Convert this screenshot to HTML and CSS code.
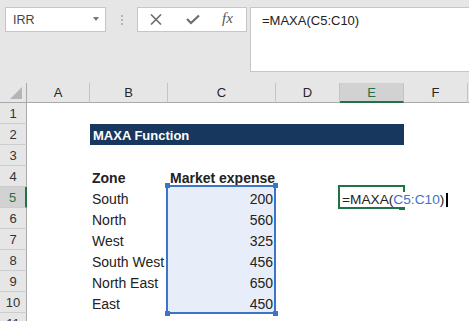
FILE: index.html
```html
<!DOCTYPE html>
<html>
<head>
  <meta charset="utf-8">
  <link rel="stylesheet" href="styles.css">
</head>
<body>
  <div class="toolbar">
    <div class="namebox">IRR<span class="caret"></span></div>
    <div class="grip"><i></i><i></i><i></i></div>
    <div class="fbtns">
      <svg class="ic-x" width="12" height="11" viewBox="0 0 12 11"><path d="M1 0.5 L11 10.5 M11 0.5 L1 10.5" stroke="#6d6d6d" stroke-width="1.6" fill="none"/></svg>
      <svg class="ic-ok" width="14" height="11" viewBox="0 0 14 11"><path d="M1 5 L5 9 L13 1.5" stroke="#6d6d6d" stroke-width="2.2" fill="none"/></svg>
      <span class="fx">fx</span>
    </div>
    <div class="formula">=MAXA(C5:C10)</div>
  </div>

  <div class="sheet">
    <div class="row head">
      <div class="rh corner"><span class="tri"></span></div>
      <div class="ch a">A</div>
      <div class="ch b">B</div>
      <div class="ch c">C</div>
      <div class="ch d">D</div>
      <div class="ch e on">E</div>
      <div class="ch f">F</div>
      <div class="ch g"></div>
    </div>

    <div class="row"><div class="rh">1</div></div>

    <div class="row">
      <div class="rh">2</div>
      <div class="cell a"></div>
      <div class="cell title">MAXA Function</div>
    </div>

    <div class="row"><div class="rh">3</div></div>

    <div class="row">
      <div class="rh">4</div>
      <div class="cell a"></div>
      <div class="cell b bold">Zone</div>
      <div class="cell c bold">Market expense</div>
    </div>

    <div class="row">
      <div class="rh on">5</div>
      <div class="cell a"></div>
      <div class="cell b">South</div>
      <div class="cell c sel first">200
        <div class="range">
          <span class="hd tl"></span><span class="hd tr"></span>
          <span class="hd bl"></span><span class="hd br"></span>
        </div>
      </div>
      <div class="cell d"></div>
      <div class="cell e active">
        <div class="frame"><span class="fill"></span></div>
        <span class="edit">=MAXA(<span class="ref">C5:C10</span>)<i class="caret-bar"></i></span>
      </div>
    </div>

    <div class="row">
      <div class="rh">6</div>
      <div class="cell a"></div>
      <div class="cell b">North</div>
      <div class="cell c sel">560</div>
    </div>

    <div class="row">
      <div class="rh">7</div>
      <div class="cell a"></div>
      <div class="cell b">West</div>
      <div class="cell c sel">325</div>
    </div>

    <div class="row">
      <div class="rh">8</div>
      <div class="cell a"></div>
      <div class="cell b">South West</div>
      <div class="cell c sel">456</div>
    </div>

    <div class="row">
      <div class="rh">9</div>
      <div class="cell a"></div>
      <div class="cell b">North East</div>
      <div class="cell c sel">650</div>
    </div>

    <div class="row">
      <div class="rh">10</div>
      <div class="cell a"></div>
      <div class="cell b">East</div>
      <div class="cell c sel">450</div>
    </div>

    <div class="row"><div class="rh">11</div></div>
  </div>
</body>
</html>
```

FILE: styles.css
```css
body {
  margin: 0;
  width: 469px;
  height: 321px;
  overflow: hidden;
  background: #fff;
  font-family: "Liberation Sans", Arial, sans-serif;
  color: #222;
}

/* Formula bar */
.toolbar {
  height: 83px;
  box-sizing: border-box;
  padding: 7px 0 0 5px;
  background: #e6e6e6;
  display: flex;
  align-items: flex-start;
}

.namebox {
  width: 101px;
  height: 25px;
  box-sizing: border-box;
  border: 1px solid #c6c6c6;
  background: #fff;
  display: flex;
  align-items: center;
  justify-content: space-between;
  padding: 0 6px 0 7px;
  font-size: 12.5px;
  color: #444;
}

.caret {
  width: 0;
  height: 0;
  border-left: 3px solid transparent;
  border-right: 3px solid transparent;
  border-top: 4px solid #777;
  margin-top: -2px;
}

.grip {
  width: 31px;
  height: 25px;
  display: flex;
  flex-direction: column;
  align-items: center;
  justify-content: center;
  gap: 2px;
}

.grip i {
  width: 2px;
  height: 2px;
  background: #b4b4b4;
}

.fbtns {
  width: 110px;
  height: 25px;
  box-sizing: border-box;
  border: 1px solid #c6c6c6;
  background: #fff;
  display: flex;
  align-items: center;
  padding-left: 12px;
}

.ic-x {
  display: block;
}

.ic-ok {
  display: block;
  margin-left: 24px;
}

.fx {
  margin-left: 22px;
  font-family: "Liberation Serif", serif;
  font-style: italic;
  font-size: 15px;
  color: #555;
  margin-top: -2px;
}

.formula {
  flex: 1;
  height: 65px;
  box-sizing: border-box;
  margin-left: 3px;
  border: 1px solid #c6c6c6;
  border-right: none;
  background: #fff;
  padding: 5px 11px;
  font-size: 13px;
  line-height: 16px;
  color: #222;
}

/* Grid */
.sheet {
  background: #fff;
}

.row {
  display: flex;
  height: 21px;
}

.row.head {
  height: 20px;
}

.rh {
  width: 27px;
  flex: none;
  box-sizing: border-box;
  border-right: 1px solid #a9a9a9;
  border-bottom: 1px solid #cdcdcd;
  background: #e6e6e6;
  text-align: center;
  font-size: 13px;
  line-height: 21px;
  color: #333;
}

.rh.on {
  background: #d2d2d2;
  color: #217346;
  border-right: 2px solid #217346;
}

.rh.corner {
  border-bottom-color: #a9a9a9;
  display: flex;
  justify-content: flex-end;
  align-items: flex-end;
  padding: 0 4px 3px 0;
}

.tri {
  width: 0;
  height: 0;
  border-left: 12px solid transparent;
  border-bottom: 12px solid #b5b5b5;
}

.ch {
  flex: none;
  box-sizing: border-box;
  border-right: 1px solid #c4c4c4;
  border-bottom: 1px solid #a9a9a9;
  background: #e6e6e6;
  text-align: center;
  font-size: 13px;
  line-height: 19px;
  color: #262626;
}

.ch.on {
  background: #d2d2d2;
  color: #217346;
  border-bottom: 2px solid #217346;
}

.ch.g {
  flex: 1;
  border-right: none;
}

.a { width: 63px; }
.b { width: 78px; }
.c { width: 108px; }
.d { width: 64px; }
.e { width: 64px; }
.f { width: 64px; }

.cell {
  flex: none;
  height: 21px;
  box-sizing: border-box;
  display: flex;
  align-items: flex-end;
  padding: 0 2px 1px 2px;
  font-size: 14px;
  line-height: 16px;
  white-space: nowrap;
}

.bold {
  font-weight: bold;
}

.title {
  width: 314px;
  background: #17375e;
  color: #fff;
  font-weight: bold;
  font-size: 13px;
  padding-left: 3px;
}

/* Referenced range C5:C10 */
.sel {
  background: #e7eef9;
  justify-content: flex-end;
  padding-right: 3px;
}

.first {
  position: relative;
}

.range {
  position: absolute;
  top: -2px;
  left: -2px;
  width: 110px;
  height: 129px;
  box-sizing: border-box;
  border: 2px solid #3d73c9;
  pointer-events: none;
}

.hd {
  position: absolute;
  width: 5px;
  height: 5px;
  background: #3d73c9;
}

.hd.tl { left: -3px; top: -4px; }
.hd.tr { right: -4px; top: -4px; }
.hd.bl { left: -3px; bottom: -4px; }
.hd.br { right: -4px; bottom: -4px; }

/* Active cell E5 in edit mode */
.active {
  position: relative;
  overflow: visible;
}

.frame {
  position: absolute;
  top: -2px;
  left: -2px;
  width: 67px;
  height: 24px;
  box-sizing: border-box;
  border: 2px solid #217346;
  z-index: 1;
}

.fill {
  position: absolute;
  left: 59px;
  bottom: -3px;
  width: 6px;
  height: 5px;
  background: #217346;
}

.edit {
  position: relative;
  z-index: 2;
  background: #fff;
  font-size: 13.7px;
  line-height: 15px;
  color: #222;
  display: flex;
  align-items: center;
}

.ref {
  color: #3d73c9;
}

.caret-bar {
  display: block;
  width: 2px;
  height: 14px;
  margin-left: 2px;
  background: #000;
}
```
